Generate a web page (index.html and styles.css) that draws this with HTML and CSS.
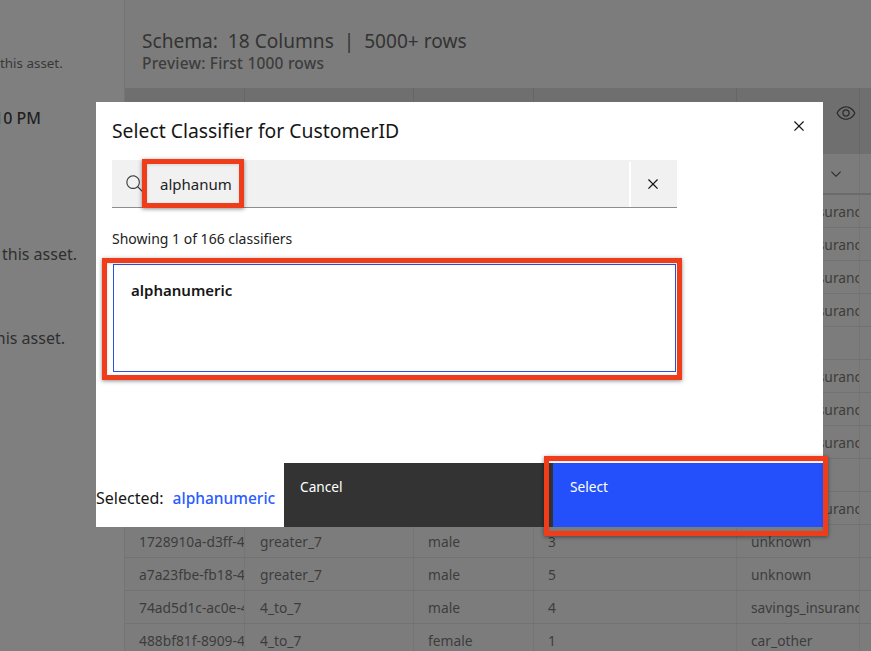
FILE: index.html
```html
<!DOCTYPE html>
<html lang="en">
<head>
<meta charset="utf-8">
<title>Select Classifier</title>
<link rel="stylesheet" href="styles.css">
</head>
<body>
<div class="page">
  <aside class="side">
    <p class="note note-a">this asset.</p>
    <p class="note note-b">10 PM</p>
    <p class="note note-c">this asset.</p>
    <p class="note note-d">this asset.</p>
  </aside>
  <main class="main">
    <header class="schema">
      <h1 class="schema-title">Schema:  18 Columns  |  5000+ rows</h1>
      <p class="schema-sub">Preview: First 1000 rows</p>
    </header>
    <div class="grid">
      <div class="row row-head"><span class="cell"></span><span class="cell"></span><span class="cell"></span><span class="cell"></span><span class="cell cell-icon"><svg class="eye" viewBox="0 0 16 16"><path d="M15.5 7.8C14.3 4.7 11.3 2.6 8 2.5 4.7 2.6 1.7 4.7.5 7.8v.3c1.2 3.1 4.2 5.2 7.5 5.3 3.3-.1 6.3-2.2 7.5-5.3v-.3zM8 12.5c-2.7 0-5.4-2-6.5-4.5 1-2.5 3.8-4.5 6.5-4.5s5.4 2 6.5 4.5c-1.1 2.5-3.8 4.5-6.5 4.5z"/><path d="M8 5C6.3 5 5 6.3 5 8s1.3 3 3 3 3-1.3 3-3-1.3-3-3-3zm0 5c-1.1 0-2-.9-2-2s.9-2 2-2 2 .9 2 2-.9 2-2 2z"/></svg></span><span class="cell"></span></div>
      <div class="row row-filter"><span class="cell"></span><span class="cell"></span><span class="cell"></span><span class="cell"></span><span class="cell cell-icon"><svg class="chev" viewBox="0 0 16 16"><path d="M8 11 3 6l.7-.7L8 9.6l4.3-4.3.7.7z"/></svg></span><span class="cell"></span></div>
      <div class="row"><span class="cell"></span><span class="cell"></span><span class="cell"></span><span class="cell"></span><span class="cell">savings_insurance</span><span class="cell"></span></div>
      <div class="row"><span class="cell"></span><span class="cell"></span><span class="cell"></span><span class="cell"></span><span class="cell">savings_insurance</span><span class="cell"></span></div>
      <div class="row"><span class="cell"></span><span class="cell"></span><span class="cell"></span><span class="cell"></span><span class="cell">savings_insurance</span><span class="cell"></span></div>
      <div class="row"><span class="cell"></span><span class="cell"></span><span class="cell"></span><span class="cell"></span><span class="cell">savings_insurance</span><span class="cell"></span></div>
      <div class="row"><span class="cell"></span><span class="cell"></span><span class="cell"></span><span class="cell"></span><span class="cell"></span><span class="cell"></span></div>
      <div class="row"><span class="cell"></span><span class="cell"></span><span class="cell"></span><span class="cell"></span><span class="cell">savings_insurance</span><span class="cell"></span></div>
      <div class="row"><span class="cell"></span><span class="cell"></span><span class="cell"></span><span class="cell"></span><span class="cell">savings_insurance</span><span class="cell"></span></div>
      <div class="row"><span class="cell"></span><span class="cell"></span><span class="cell"></span><span class="cell"></span><span class="cell">savings_insurance</span><span class="cell"></span></div>
      <div class="row"><span class="cell"></span><span class="cell"></span><span class="cell"></span><span class="cell"></span><span class="cell"></span><span class="cell"></span></div>
      <div class="row"><span class="cell"></span><span class="cell"></span><span class="cell"></span><span class="cell"></span><span class="cell">savings_insurance</span><span class="cell"></span></div>
      <div class="row"><span class="cell">1728910a-d3ff-4</span><span class="cell">greater_7</span><span class="cell">male</span><span class="cell">3</span><span class="cell">unknown</span><span class="cell"></span></div>
      <div class="row"><span class="cell">a7a23fbe-fb18-4</span><span class="cell">greater_7</span><span class="cell">male</span><span class="cell">5</span><span class="cell">unknown</span><span class="cell"></span></div>
      <div class="row"><span class="cell">74ad5d1c-ac0e-4</span><span class="cell">4_to_7</span><span class="cell">male</span><span class="cell">4</span><span class="cell">savings_insurance</span><span class="cell"></span></div>
      <div class="row"><span class="cell">488bf81f-8909-4</span><span class="cell">4_to_7</span><span class="cell">female</span><span class="cell">1</span><span class="cell">car_other</span><span class="cell"></span></div>
    </div>
  </main>
</div>

<section class="modal">
  <div class="modal-head">
    <h2 class="modal-title">Select Classifier for CustomerID</h2>
    <svg class="icon-x" viewBox="0 0 16 16"><path d="M12 4.7 11.3 4 8 7.3 4.7 4 4 4.7 7.3 8 4 11.3l.7.7L8 8.7l3.3 3.3.7-.7L8.7 8z"/></svg>
  </div>
  <div class="search">
    <svg class="icon-search" viewBox="0 0 16 16"><path d="m15 14.3-4.3-4.3c1.9-2.3 1.6-5.8-.7-7.7S4.2.7 2.3 3 .7 8.8 3 10.7c2 1.7 5 1.7 7 0l4.3 4.3.7-.7zM2 6.5C2 4 4 2 6.5 2S11 4 11 6.5 9 11 6.5 11 2 9 2 6.5z"/></svg>
    <span class="search-text">alphanum</span>
    <span class="search-clear"><svg class="icon-x" viewBox="0 0 16 16"><path d="M12 4.7 11.3 4 8 7.3 4.7 4 4 4.7 7.3 8 4 11.3l.7.7L8 8.7l3.3 3.3.7-.7L8.7 8z"/></svg></span>
  </div>
  <p class="count">Showing 1 of 166 classifiers</p>
  <div class="card">alphanumeric</div>
  <footer class="foot">
    <div class="selected"><span>Selected:</span><b class="selected-name">alphanumeric</b></div>
    <button class="btn btn-cancel" type="button">Cancel</button>
    <button class="btn btn-select" type="button">Select</button>
  </footer>
</section>

<div class="mark mark-search"></div>
<div class="mark mark-card"></div>
<div class="mark mark-select"></div>
</body>
</html>
```

FILE: styles.css
```css
* { box-sizing: border-box; }
html, body { margin: 0; height: 100%; }
body {
  position: relative;
  width: 871px;
  height: 651px;
  overflow: hidden;
  background: #7c7c7c;
  font-family: "Noto Sans", "Open Sans", sans-serif;
  color: #333;
}
.page { display: flex; height: 651px; overflow: hidden; }

/* left panel */
.side {
  flex: 0 0 125px;
  background: #7f7f7f;
  border-right: 1px solid #747474;
  overflow: hidden;
  display: flex;
  flex-direction: column;
}
.note { margin: 0; white-space: nowrap; line-height: 20px; color: #2f2f2f; flex: none; }
.note-a { margin-top: 53px; margin-left: 0; font-size: 13.4px; color: #383838; }
.note-b { margin-top: 35px; margin-left: -6px; font-size: 16px; font-weight: 500; color: #1f1f1f; }
.note-c { margin-top: 116px; margin-left: 2px; font-size: 16px; }
.note-d { margin-top: 64px; margin-left: -10px; font-size: 16px; }

/* main */
.main { flex: 1; min-width: 0; display: flex; flex-direction: column; }
.schema { flex: none; height: 88px; padding: 28px 0 0 17px; }
.schema-title { margin: 0; font-size: 19.1px; line-height: 26px; font-weight: 400; white-space: pre; color: #333; }
.schema-sub { margin: 0; font-size: 15.5px; letter-spacing: .2px; line-height: 19px; font-weight: 500; color: #3d3d3d; }

.grid { flex: none; display: flex; flex-direction: column; }
.row {
  flex: none;
  display: grid;
  grid-template-columns: 120px 169px 120px 203px 123px 1fr;
  height: 33px;
  border-bottom: 1px solid #727272;
  font-size: 13.8px;
  color: #3c3c3c;
}
.row-head { height: 66px; background: #6f6f6f; border-bottom: 0; }
.row-filter { height: 41px; border-bottom: 2px solid #6b6b6b; }
.cell {
  display: flex;
  align-items: center;
  padding-left: 14px;
  overflow: hidden;
  white-space: nowrap;
  border-right: 1px solid #757575;
}
.cell:nth-child(2) { padding-left: 15px; }
.row-head .cell { border-right-color: #666; align-items: flex-start; }
.cell-icon { justify-content: flex-end; padding-right: 3px; }
.eye { width: 20px; height: 20px; margin-top: 15px; fill: #2a2a2a; }
.chev { width: 16px; height: 16px; margin-right: 12px; fill: #2a2a2a; }

/* modal overlay */
.modal {
  position: absolute;
  left: 96px;
  top: 102px;
  width: 727px;
  height: 425px;
  background: #fff;
  color: #161616;
  display: flex;
  flex-direction: column;
}
.modal-head {
  display: flex;
  align-items: flex-start;
  justify-content: space-between;
  padding: 15px 14px 0 16px;
  height: 58px;
}
.modal-title { margin: 0; font-size: 19.35px; line-height: 28px; font-weight: 400; }
.icon-x { width: 20px; height: 20px; margin-top: -1px; fill: #161616; }
.search {
  margin-left: 16px;
  width: 565px;
  height: 48px;
  display: flex;
  align-items: center;
  background: #f1f1f1;
  border-bottom: 1px solid #8d8d8d;
}
.icon-search { width: 20px; height: 20px; margin-left: 13px; fill: #444; flex: none; }
.search-text { flex: 1; margin-left: 15px; font-size: 15px; color: #222; }
.search-clear {
  width: 48px;
  height: 45px;
  margin-top: 1px;
  padding-right: 2px;
  border-left: 2px solid #fff;
  display: flex;
  align-items: center;
  justify-content: center;
}
.search-clear .icon-x { margin: 0; }
.count { margin: 21px 0 0 16px; font-size: 14px; line-height: 20px; color: #222; }
.card {
  margin: 15px 0 0 17px;
  width: 563px;
  height: 108px;
  border: 1px solid #2b50e6;
  padding: 14px 0 0 17px;
  font-size: 15px;
  line-height: 22px;
  font-weight: 600;
}
.foot { margin-top: auto; display: flex; height: 64px; }
.selected {
  flex: 0 0 188px;
  display: flex;
  align-items: center;
  gap: 9px;
  padding-top: 5px;
  font-size: 16px;
  white-space: nowrap;
}
.selected-name { color: #2a5cff; font-weight: 500; font-size: 15.5px; }
.btn {
  border: 0;
  margin: 0;
  font-family: inherit;
  font-size: 13.7px;
  color: #fff;
  text-align: left;
  vertical-align: top;
  display: flex;
  align-items: flex-start;
  padding: 14px 0 0 16px;
}
.btn-cancel { flex: 0 0 269px; background: #333; }
.btn-select { flex: 0 0 270px; background: #2450fb; padding-left: 17px; }

/* annotation frames drawn over the screenshot */
.mark {
  position: absolute;
  border: 5px solid #ef3c1a;
  box-shadow: 0 1px 4px rgba(0, 0, 0, .45), inset 0 1px 3px rgba(0, 0, 0, .12);
}
.mark-search { left: 142px; top: 159px; width: 102px; height: 49px; }
.mark-card { left: 102px; top: 258px; width: 580px; height: 122px; }
.mark-select { left: 544px; top: 456px; width: 284px; height: 80px; }
```
